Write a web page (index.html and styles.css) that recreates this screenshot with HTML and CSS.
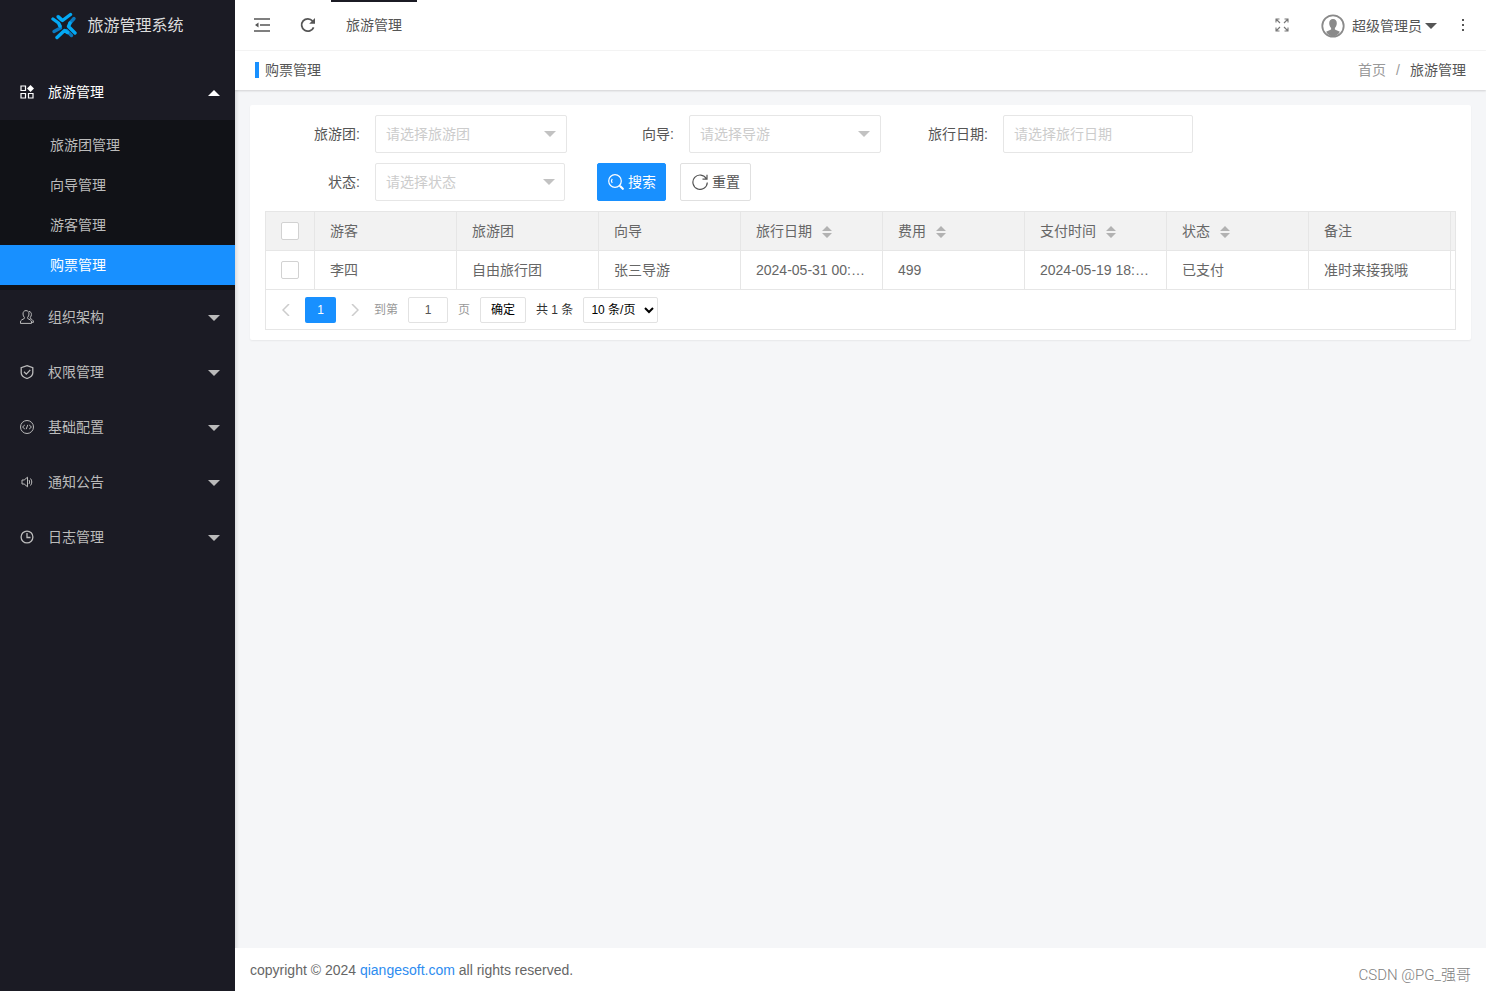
FILE: index.html
```html
<!DOCTYPE html>
<html lang="zh-CN">
<head>
<meta charset="utf-8">
<title>旅游管理系统</title>
<link rel="stylesheet" href="styles.css">
</head>
<body>
<div class="app">
  <aside class="sidebar">
    <div class="brand">
      <svg class="brand-logo" viewBox="0 0 26 28" aria-hidden="true">
        <g fill="none" stroke-width="3.400" stroke-linecap="round" stroke-linejoin="round">
          <path stroke="#0b78bd" d="M23 6.500l-4 4.500M8.500 13l1 3L3 19.500M15.500 18.500l5 5M7 4.500l3 3"/>
          <path stroke="#03a9f4" d="M2 7l5.500 4 1.500 3M7.500 5l4 3.500L19.500 2.500M19 11l-1.500 3.500L24 21M6 25.500l7.500-7 3 2"/>
        </g>
      </svg>
      <span>旅游管理系统</span>
    </div>
    <nav class="menu">
      <button class="menu-item active" type="button">
        <svg class="icon14" viewBox="0 0 14 14" fill="none" stroke="currentColor" stroke-width="1.200"><path d="M1 1h4.500v4.500H1zM1 8.500h4.500V13H1zM8.500 8.500H13V13H8.500z"/><path fill="currentColor" stroke="none" d="M10.500 0L14 3.500 10.500 7 7 3.500z"/></svg>
        <span>旅游管理</span><i class="caret up"></i>
      </button>
      <div class="submenu">
        <a href="#">旅游团管理</a>
        <a href="#">向导管理</a>
        <a href="#">游客管理</a>
        <a href="#" class="selected">购票管理</a>
      </div>
      <button class="menu-item" type="button">
        <svg class="icon14" viewBox="0 0 14 14" fill="none" stroke="currentColor"><path d="M6 .6C4 .6 3 2 3 4c0 1.500.6 2.600 1.400 3.400v1L1.600 10C.8 10.500.5 11 .5 12v1.400h11V12c0-1-.3-1.500-1.100-2L7.600 8.400v-1C8.400 6.600 9 5.500 9 4 9 2 8 .6 6 .6zM9 1.400c1.600.2 2.400 1.400 2.400 3 0 1.300-.4 2.100-1.100 2.900v1l2 1.500c.8.500 1.200 1.200 1.200 2.500h-1.700"/></svg>
        <span>组织架构</span><i class="caret"></i>
      </button>
      <button class="menu-item" type="button">
        <svg class="icon14" viewBox="0 0 14 14" fill="none" stroke="currentColor" stroke-width="1.300"><path d="M7 .7l5.800 2v5c0 3-2.300 4.600-5.800 5.800-3.500-1.200-5.800-2.800-5.800-5.800v-5zM4 6.800l2.300 2.300 4-4.200"/></svg>
        <span>权限管理</span><i class="caret"></i>
      </button>
      <button class="menu-item" type="button">
        <svg class="icon14" viewBox="0 0 14 14" fill="none" stroke="currentColor"><circle cx="7" cy="7" r="6.500"/><path d="M4.800 5L2.500 7l2.300 2M9.200 5l2.300 2-2.300 2M7.800 4.800l-1.600 4.400"/></svg>
        <span>基础配置</span><i class="caret"></i>
      </button>
      <button class="menu-item" type="button">
        <svg class="icon14" viewBox="0 0 14 14" fill="none" stroke="currentColor"><path d="M2 5h2.200L7.500 2.200v9.600L4.200 9H2z"/><path d="M9 5c.8 1.200.8 2.800 0 4M10.500 3.500c1.700 2 1.700 5 0 7"/></svg>
        <span>通知公告</span><i class="caret"></i>
      </button>
      <button class="menu-item" type="button">
        <svg class="icon14" viewBox="0 0 14 14" fill="none" stroke="currentColor" stroke-width="1.300"><circle cx="7" cy="7" r="5.900"/><path d="M7 3v4.500h3.500"/></svg>
        <span>日志管理</span><i class="caret"></i>
      </button>
    </nav>
  </aside>

  <div class="main">
    <header class="topbar">
      <button class="tool" type="button" aria-label="收起菜单">
        <svg class="icon16" viewBox="0 0 16 16" fill="none" stroke="currentColor" stroke-width="1.500"><path d="M0 2h16M6 8h10M0 14h16"/><path fill="currentColor" stroke="none" d="M1 8l3.500-2.500v5z"/></svg>
      </button>
      <button class="tool" type="button" aria-label="刷新">
        <svg class="icon16" viewBox="0 0 16 16" fill="none" stroke="currentColor" stroke-width="1.800"><path d="M13.600 10.300A6.200 6.200 0 1 1 12.600 4"/><path fill="currentColor" stroke="none" d="M15 1v5.800H9.200z"/></svg>
      </button>
      <a class="tab" href="#">旅游管理</a>
      <div class="user-tools">
        <button class="tool" type="button" aria-label="全屏">
          <svg class="icon14 fullscreen" viewBox="0 0 14 14" fill="none" stroke="currentColor" stroke-width="1.100"><path d="M1 4.500V1h3.500M1 1l4 4M9.500 1H13v3.500M13 1L9 5M1 9.500V13h3.500M1 13l4-4M13 9.500V13H9.500M13 13L9 9"/></svg>
        </button>
        <button class="user" type="button">
          <svg class="avatar" viewBox="0 0 24 24"><circle cx="12" cy="12" r="10.700" fill="#fff" stroke="#8a8a8a" stroke-width="1.800"/><path fill="#8a8a8a" d="M12 5c-2.500 0-3.800 1.800-3.800 4.300 0 1.900.7 3.500 1.900 4.600v1.600l-5 2.300C6.800 20.700 9 22.300 12 22.300s5.200-1.600 6.900-4.500l-5-2.300v-1.600c1.200-1.100 1.900-2.700 1.900-4.600C15.800 6.800 14.500 5 12 5z"/></svg>
          <span>超级管理员</span><i class="caret"></i>
        </button>
        <button class="tool more" type="button" aria-label="更多">
          <svg class="icon16" viewBox="0 0 16 16" fill="currentColor"><path d="M7 2h2v2H7zM7 7h2v2H7zM7 12h2v2H7z"/></svg>
        </button>
      </div>
    </header>

    <div class="crumbbar">
      <h1 class="page-title">购票管理</h1>
      <nav class="crumbs"><a href="#">首页</a><span>/</span><strong>旅游管理</strong></nav>
    </div>

    <main class="content">
      <section class="panel">
        <form class="search">
          <div class="field">
            <label for="team">旅游团:</label>
            <div class="select-wrap"><select id="team"><option>请选择旅游团</option></select><i class="caret"></i></div>
          </div>
          <div class="field">
            <label for="guide">向导:</label>
            <div class="select-wrap"><select id="guide"><option>请选择导游</option></select><i class="caret"></i></div>
          </div>
          <div class="field">
            <label for="date">旅行日期:</label>
            <input id="date" type="text" placeholder="请选择旅行日期">
          </div>
          <div class="field">
            <label for="status">状态:</label>
            <div class="select-wrap narrow"><select id="status"><option>请选择状态</option></select><i class="caret"></i></div>
          </div>
          <div class="actions">
            <button class="btn primary" type="button">
              <svg class="icon16" viewBox="0 0 16 16" fill="none" stroke="currentColor" stroke-width="1.200"><circle cx="7" cy="7" r="6.300"/><path d="M4.200 9A3.500 3.500 0 0 1 4.200 4.800"/><path stroke-width="2.200" stroke-linecap="round" d="M12.300 12.300l2.500 2.500"/></svg>搜索
            </button>
            <button class="btn" type="button">
              <svg class="icon16" viewBox="0 0 16 16" fill="none" stroke="currentColor" stroke-width="1.200"><path d="M15.300 8.500A7.200 7.200 0 1 1 14.400 4.700M15 .8v4.400h-4.500"/></svg>重置
            </button>
          </div>
        </form>

        <div class="grid">
          <table>
            <colgroup><col class="col-check"><col><col><col><col><col><col><col><col><col class="col-end"></colgroup>
            <thead>
              <tr>
                <th><input type="checkbox" aria-label="全选"></th>
                <th>游客</th>
                <th>旅游团</th>
                <th>向导</th>
                <th>旅行日期<svg class="sort" viewBox="0 0 10 12"><path d="M5 0l5 5H0zM0 7h10l-5 5z"/></svg></th>
                <th>费用<svg class="sort" viewBox="0 0 10 12"><path d="M5 0l5 5H0zM0 7h10l-5 5z"/></svg></th>
                <th>支付时间<svg class="sort" viewBox="0 0 10 12"><path d="M5 0l5 5H0zM0 7h10l-5 5z"/></svg></th>
                <th>状态<svg class="sort" viewBox="0 0 10 12"><path d="M5 0l5 5H0zM0 7h10l-5 5z"/></svg></th>
                <th>备注</th>
                <th class="end"></th>
              </tr>
            </thead>
            <tbody>
              <tr>
                <td><input type="checkbox" aria-label="选择李四"></td>
                <td>李四</td>
                <td>自由旅行团</td>
                <td>张三导游</td>
                <td>2024-05-31 00:00:00</td>
                <td>499</td>
                <td>2024-05-19 18:30:00</td>
                <td>已支付</td>
                <td>准时来接我哦</td>
                <td class="end"></td>
              </tr>
            </tbody>
          </table>
          <div class="pager">
            <button class="arrow" type="button" aria-label="上一页"><svg viewBox="0 0 8 12"><path d="M7 0L1 6l6 6"/></svg></button>
            <button class="current" type="button">1</button>
            <button class="arrow" type="button" aria-label="下一页"><svg viewBox="0 0 8 12"><path d="M1 0l6 6-6 6"/></svg></button>
            <div class="jump">
              <label for="page">到第</label>
              <input id="page" type="text" value="1">
              <span>页</span>
              <button class="go" type="button">确定</button>
              <span class="total">共 1 条</span>
              <select aria-label="每页条数"><option>10 条/页</option></select>
            </div>
          </div>
        </div>
      </section>
    </main>

    <footer class="footer">copyright © 2024 <a href="#">qiangesoft.com</a> all rights reserved.</footer>
    <span class="watermark">CSDN @PG_强哥</span>
  </div>
</div>
</body>
</html>
```
FILE: styles.css
```css
* { box-sizing: border-box; }

body {
  margin: 0;
  font: 14px/24px "Liberation Sans", "Noto Sans CJK SC", sans-serif;
  color: #555;
  background: #f5f6f8;
}

a { color: inherit; text-decoration: none; }
button, input, select { font: inherit; color: inherit; margin: 0; }
button { padding: 0; border: 0; background: none; cursor: pointer; }
svg { display: block; flex: none; }

.icon14 { width: 14px; height: 14px; }
.icon16 { width: 16px; height: 16px; }

.caret {
  flex: none;
  border: 6px solid transparent;
  border-top-color: currentColor;
  border-bottom-width: 0;
}
.caret.up {
  border-top-width: 0;
  border-bottom: 6px solid currentColor;
}

.app { display: flex; min-height: 100vh; }

/* Sidebar */
.sidebar {
  flex: none;
  width: 235px;
  background: #1b1b24;
  color: #bbb;
  box-shadow: 1px 0 4px rgba(0, 0, 0, .15);
}
.brand {
  display: flex;
  align-items: center;
  justify-content: center;
  gap: 10px;
  height: 52px;
  font-size: 16px;
  color: #ddd;
}
.brand-logo { width: 26px; height: 28px; }
.menu { padding-top: 13px; }
.menu-item {
  display: flex;
  align-items: center;
  gap: 14px;
  width: 100%;
  height: 55px;
  padding: 0 15px 2px 20px;
}
.menu-item .caret { margin: 2px 0 0 auto; }
.menu-item.active { color: #fff; }
.submenu { padding: 5px 0; background: #111217; }
.submenu a {
  display: block;
  padding-left: 50px;
  line-height: 40px;
}
.submenu .selected { background: #1890ff; color: #fff; }

/* Header */
.main {
  position: relative;
  display: flex;
  flex-direction: column;
  flex: 1;
  min-width: 0;
}
.topbar {
  display: flex;
  height: 51px;
  padding-left: 4px;
  background: #fff;
  border-bottom: 1px solid #f5f5f5;
}
.tool {
  display: flex;
  align-items: center;
  justify-content: center;
  width: 46px;
}
.tab {
  padding: 0 15px;
  border-top: 2px solid #1b1b24;
  line-height: 46px;
}
.user-tools { display: flex; margin-left: auto; }
.fullscreen { color: #777; }
.user {
  display: flex;
  align-items: center;
  padding: 2px 3px 0 16px;
}
.avatar { width: 24px; height: 24px; margin-right: 7px; }
.user .caret { margin-left: 3px; }

.crumbbar {
  position: relative;
  display: flex;
  align-items: center;
  justify-content: space-between;
  height: 39px;
  padding: 0 20px 2px;
  background: #fff;
  box-shadow: 0 1px 2px rgba(0, 0, 0, .15);
}
.page-title {
  margin: 0;
  padding-left: 6px;
  border-left: 4px solid #1890ff;
  font-size: 14px;
  font-weight: 400;
  line-height: 16px;
}
.crumbs { display: flex; gap: 10px; color: #999; }
.crumbs strong { font-weight: 400; color: #555; }

/* Search form */
.content { flex: 1; padding: 15px; }
.panel {
  padding: 10px 15px;
  background: #fff;
  border-radius: 2px;
  box-shadow: 0 1px 2px rgba(0, 0, 0, .06);
}
.search {
  display: flex;
  flex-wrap: wrap;
  gap: 10px 12px;
  margin-bottom: 10px;
}
.field { display: flex; align-items: center; }
.field label { width: 110px; padding-right: 15px; text-align: right; }
.field input, .field select {
  width: 190px;
  height: 38px;
  padding: 0 10px;
  border: 1px solid #e6e6e6;
  border-radius: 2px;
  background: #fff;
}
.field input::placeholder { color: #ccc; }
.select-wrap { position: relative; width: 192px; }
.select-wrap.narrow { width: 190px; }
.field select { display: block; width: 100%; appearance: none; color: #ccc; }
.select-wrap .caret {
  position: absolute;
  top: 16px;
  right: 11px;
  color: #c2c2c2;
  pointer-events: none;
}
.select-wrap.narrow .caret { right: 10px; }
.actions { display: flex; gap: 14px; margin-left: 20px; }
.btn {
  display: flex;
  align-items: center;
  gap: 4px;
  height: 38px;
  padding: 0 10px 0 11px;
  border: 1px solid #e0e0e0;
  border-radius: 2px;
}
.btn.primary {
  padding: 0 9px 0 10px;
  border-color: #1890ff;
  background: #1890ff;
  color: #fff;
}

/* Table */
.grid { border: 1px solid #e6e6e6; color: #666; }
table { width: 100%; table-layout: fixed; border-spacing: 0; }
.col-check { width: 49px; }
.col-end { width: 4px; }
th, td {
  height: 39px;
  padding: 0 15px;
  border-right: 1px solid #e6e6e6;
  border-bottom: 1px solid #e6e6e6;
  font-weight: 400;
  text-align: left;
  white-space: nowrap;
  overflow: hidden;
  text-overflow: ellipsis;
}
th { background: #f2f2f2; }
.end { padding: 0; border-right: 0; }
th:first-child, td:first-child { text-overflow: clip; }
input[type="checkbox"] {
  display: block;
  width: 18px;
  height: 18px;
  appearance: none;
  border: 1px solid #d2d2d2;
  border-radius: 2px;
  background: #fff;
}
.sort {
  display: inline-block;
  width: 10px;
  height: 12px;
  margin-left: 10px;
  vertical-align: middle;
  fill: #b2b2b2;
}

/* Pagination */
.pager {
  display: flex;
  align-items: center;
  height: 39px;
  padding-left: 1px;
  font-size: 12px;
  color: #333;
}
.arrow {
  display: flex;
  justify-content: center;
  width: 38px;
}
.arrow svg {
  width: 8px;
  height: 12px;
  fill: none;
  stroke: #ccc;
  stroke-width: 1.5;
}
.current {
  width: 31px;
  height: 26px;
  border-radius: 2px;
  background: #1890ff;
  color: #fff;
}
.jump { display: flex; align-items: center; gap: 10px; color: #999; }
.jump input, .jump select, .go {
  height: 26px;
  border: 1px solid #e2e2e2;
  border-radius: 2px;
  background: #fff;
}
.jump input { width: 40px; padding: 0; text-align: center; color: #555; }
.go { width: 46px; color: #000; }
.jump select { width: 75px; padding: 0 3px; color: #000; }
.total { color: #333; }

/* Footer */
.footer {
  height: 43px;
  padding: 0 15px;
  background: #fff;
  line-height: 45px;
  color: #666;
}
.footer a { color: #2d8cf0; }
.watermark {
  position: absolute;
  right: 15px;
  bottom: 4px;
  font-family: Roboto, "Noto Sans CJK SC", sans-serif;
  font-size: 15px;
  font-weight: 300;
  color: #808080;
}
```
